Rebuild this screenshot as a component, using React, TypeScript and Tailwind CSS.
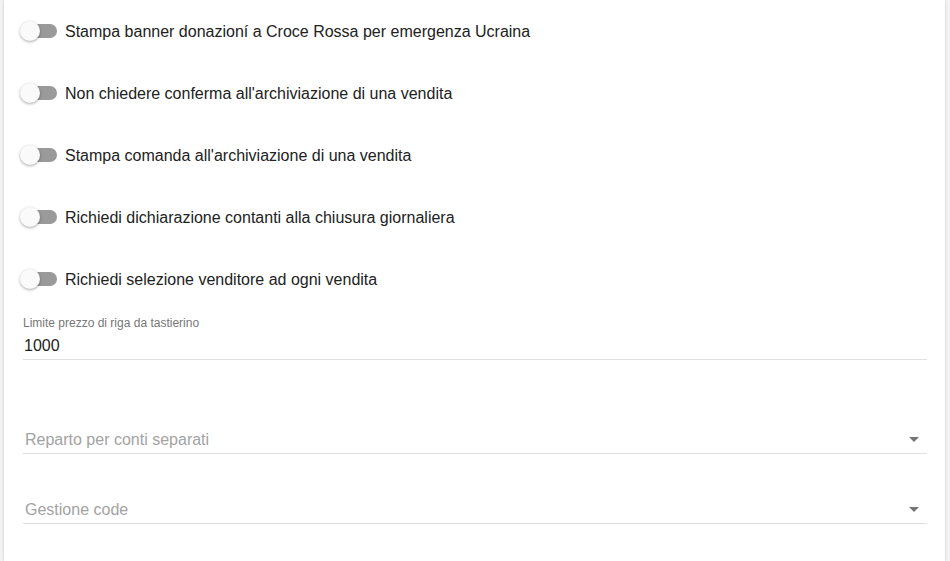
import React from 'react';

const toggles = [
    'Stampa banner donazioní a Croce Rossa per emergenza Ucraina',
    "Non chiedere conferma all'archiviazione di una vendita",
    "Stampa comanda all'archiviazione di una vendita",
    'Richiedi dichiarazione contanti alla chiusura giornaliera',
    'Richiedi selezione venditore ad ogni vendita',
];

function Switch() {
    return (
        <div className="relative h-5 w-[37px] shrink-0 pl-[3px] pt-[3px]">
            <div className="h-[14px] w-[34px] rounded-full bg-[#9a9a9a]" />
            {/* thumb sits on top of the track */}
            <div className="absolute left-0 top-0 h-5 w-5 rounded-full bg-[#fafafa] shadow-[0_1px_3px_rgba(0,0,0,0.35)]" />
        </div>
    );
}

function SelectField({ placeholder, className }: { placeholder: string; className: string }) {
    return (
        <div className={`flex items-center border-b border-[#e0e0e0] pb-[4px] ${className}`}>
            <span className="flex-1 pl-[2px] pt-[2px] text-[16px] leading-[18px] text-[#a3a3a3]">{placeholder}</span>
            <svg viewBox="0 0 24 24" className="-my-[2px] mr-[1px] h-6 w-6 fill-[#757575]">
                <path d="M7 10l5 5 5-5z" />
            </svg>
        </div>
    );
}

export default function App() {
    return (
        <div className="min-h-screen bg-[#f3f3f3] pl-[4px] pr-[5px] font-['Liberation_Sans',Arial,sans-serif]">
            <div className="min-h-[561px] bg-white pl-[16px] pr-[18px] shadow-[0_0_3px_rgba(0,0,0,0.18)]">
                {toggles.map((t) => (
                    <div key={t} className="flex h-[62px] items-center gap-[8px]">
                        <Switch />
                        <span className="pt-[2px] text-[16px] text-[#222]">{t}</span>
                    </div>
                ))}

                <div className="ml-[3px] border-b border-[#e0e0e0] pb-[3px] pt-[6px]">
                    <div className="text-[12px] leading-[14px] text-[#777]">Limite prezzo di riga da tastierino</div>
                    <div className="mt-[6px] pl-[1px] text-[16px] leading-[20px] text-[#222]">1000</div>
                </div>

                <SelectField placeholder="Reparto per conti separati" className="ml-[3px] mt-[69px]" />
                <SelectField placeholder="Gestione code" className="ml-[3px] mt-[45px]" />
            </div>
        </div>
    );
}
